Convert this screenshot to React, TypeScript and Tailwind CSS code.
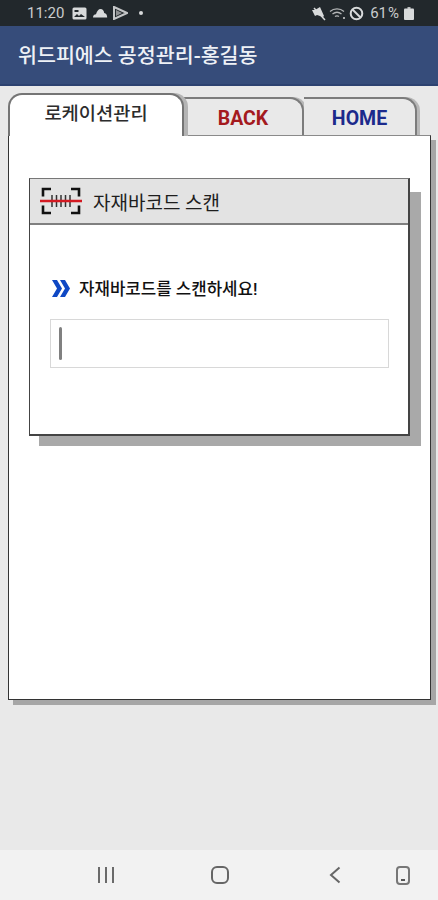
const font = "font-['Roboto','Noto_Sans_CJK_KR',sans-serif]";

function StatusBar() {
  return (
    <div className="h-[26px] bg-[#22282c] flex items-center pl-[27px] pr-[24px] text-[#c9cccd] shrink-0">
      <span className="text-[15px] leading-none w-[45px]">11:20</span>
      <svg width="15" height="13" viewBox="0 0 15 13">
        <rect x="0.5" y="0.5" width="14" height="12" rx="1.5" fill="#d8dadb" />
        <rect x="2.5" y="3" width="4" height="2" fill="#22282c" />
        <path d="M2 10l3-3 2 2 2-2 4 3z" fill="#22282c" />
      </svg>
      <svg width="16" height="10" viewBox="0 0 16 10" className="ml-[5px]">
        <path d="M1 9.500c0-2 1.500-3.200 3-3.200C5 3 6.500 1 8.500 1c2.300 0 3.500 2 3.700 4 1.800.1 3 2 3 4.500z" fill="#d8dadb" />
      </svg>
      <svg width="15" height="14" viewBox="0 0 15 14" className="ml-[5px]">
        <path d="M1 1l13 6-13 6z" fill="none" stroke="#c4c6c7" strokeWidth="2" />
        <path d="M3 4l6 3-6 3z" fill="#8f9192" />
      </svg>
      <span className="ml-[11px] w-[4px] h-[4px] rounded-full bg-[#d8dadb]" />
      <div className="ml-auto flex items-center">
        <svg width="15" height="15" viewBox="0 0 15 15">
          <path d="M1 4h3l5-3 4 9-1 1-6-2-2 1z" fill="#d8dadb" />
          <path d="M3 2l11 12" stroke="#d8dadb" strokeWidth="1.500" />
        </svg>
        <svg width="17" height="13" viewBox="0 0 17 13" className="ml-[3px]" fill="none" stroke="#b4b6b7" strokeWidth="1.300">
          <path d="M1 4.500C5 1 11 1 15 4.500" />
          <path d="M3.500 7c3-2.300 6-2.300 9 0" />
          <path d="M6 9.500c1.500-1 2.500-1 4 0" />
          <path d="M8 12v.1M15 10v2" strokeWidth="1.800" />
        </svg>
        <svg width="15" height="15" viewBox="0 0 15 15" className="ml-[3px]" fill="none" stroke="#d8dadb" strokeWidth="2">
          <circle cx="7.500" cy="7.500" r="5.800" />
          <path d="M3.500 3.500l8 8" />
        </svg>
        <span className="text-[15px] leading-none ml-[6px]">61</span>
        <span className="text-[15px] leading-none ml-[1px]">%</span>
        <svg width="10" height="13" viewBox="0 0 10 13" className="ml-[5px]">
          <rect x="3.500" y="0" width="3" height="2" fill="#b9bbbc" />
          <rect x="0" y="1.500" width="10" height="11.500" rx="1" fill="#d8dadb" />
        </svg>
      </div>
    </div>
  );
}

function Tab({ label, color, width }: { label: string; color: string; width: string }) {
  return (
    <div className={`${width} h-[38px] bg-[#e9e9e9] border-t-[2px] border-r-[2px] border-[#7c7c7c] rounded-tr-[14px] shadow-[3px_0_0_#b8b8b8] flex items-center justify-center pt-[3px] text-[19.5px] leading-none font-bold ${color}`}>
      {label}
    </div>
  );
}

function ScanIcon() {
  return (
    <svg width="42" height="30" viewBox="0 0 42 30" fill="none">
      <path d="M11 3H3v7.500M31 3h8v7.500M11 27H3v-7.500M31 27h8v-7.500" stroke="#111" strokeWidth="2.600" />
      <path d="M12 9v12M16.500 9v12M21 9v12M25.500 9v12M30 9v12" stroke="#333" strokeWidth="1.500" />
      <path d="M0 15h42" stroke="#d31a22" strokeWidth="2.500" />
    </svg>
  );
}

export default function App() {
  return (
    <div className={`w-[438px] h-[900px] flex flex-col bg-[#e9e9e9] overflow-hidden ${font}`}>
      <StatusBar />

      <div className="h-[60px] bg-[#364c7a] border-b-[2px] border-[#2d4270] flex items-center pl-[18px] pt-[2px] text-[20.6px] font-medium text-[#eef1f6] shrink-0">
        위드피에스 공정관리-홍길동
      </div>

      <div className="flex-1 pl-[8px] pt-[7px]">
        <div className="w-[423px] flex items-end relative z-10 h-[42px]">
          <div className="w-[176px] h-[43px] -mb-[1px] bg-white border-t-[2px] border-l-[2px] border-r-[2px] border-[#757575] rounded-t-[14px] shadow-[4px_0_0_#b4b4b4] flex items-center justify-center pb-[2px] text-[18.7px] font-medium text-[#2c2c2c] relative z-10">
            로케이션관리
          </div>
          <Tab label="BACK" color="text-[#a41a1e]" width="w-[120px]" />
          <Tab label="HOME" color="text-[#1c2a8c]" width="w-[113px]" />
        </div>

        <div className="w-[423px] h-[565px] bg-white border-[1px] border-[#333] border-t-[#8a8a8a] shadow-[5px_5px_0_#a6a6a6] pl-[20px] pt-[42px]">
          <div className="relative w-[381px] h-[258px]">
            <div className="absolute left-[10px] top-[14px] -right-[11px] -bottom-[10px] bg-[#a9a9a9]" />
            <div className="relative h-full bg-white border-[1px] border-[#444] border-t-[#777] border-b-[2px] border-r-[2px]">
              <div className="h-[46px] bg-[#e3e3e3] border-b-[2px] border-[#808080] flex items-center pl-[10px]">
                <ScanIcon />
                <span className="ml-[11px] text-[19px] text-[#1d1d1d] relative top-[3px]">자재바코드 스캔</span>
              </div>
              <div className="pl-[20px] pr-[19px] pt-[49px]">
                <div className="flex items-center h-[28px] pl-[2px]">
                  <svg width="18" height="17" viewBox="0 0 18 17">
                    <path d="M0 0h5l5 8.500-5 8.500H0l5-8.500z" fill="#0f48c4" />
                    <path d="M8 0h5l5 8.500-5 8.500H8l5-8.500z" fill="#0f48c4" />
                  </svg>
                  <span className="ml-[9px] text-[16.8px] font-medium text-[#111] relative top-[2px]">자재바코드를 스캔하세요!</span>
                </div>
                <div className="mt-[17px] h-[49px] w-[339px] border-[1px] border-[#d8d8d8] flex items-center pl-[8px]">
                  <span className="w-[3px] h-[33px] bg-[#808080] rounded-full" />
                </div>
              </div>
            </div>
          </div>
        </div>
      </div>

      <div className="h-[50px] bg-[#f2f2f2] shrink-0 flex items-center">
        <div className="ml-[98px] flex gap-[5px]">
          <span className="w-[2px] h-[16px] bg-[#6a6a6a]" />
          <span className="w-[2px] h-[16px] bg-[#6a6a6a]" />
          <span className="w-[2px] h-[16px] bg-[#6a6a6a]" />
        </div>
        <span className="ml-[97px] w-[18px] h-[18px] border-[2px] border-[#666] rounded-[6px]" />
        <svg width="12" height="18" viewBox="0 0 12 18" fill="none" className="ml-[100px]">
          <path d="M10.500 1.500L2 9l8.500 7.500" stroke="#666" strokeWidth="2" />
        </svg>
        <span className="ml-[55px] w-[14px] h-[19px] border-[2px] border-[#777] rounded-[4px] flex items-end justify-center pb-[2px]">
          <span className="w-[4px] h-[2px] bg-[#555]" />
        </span>
      </div>
    </div>
  );
}
